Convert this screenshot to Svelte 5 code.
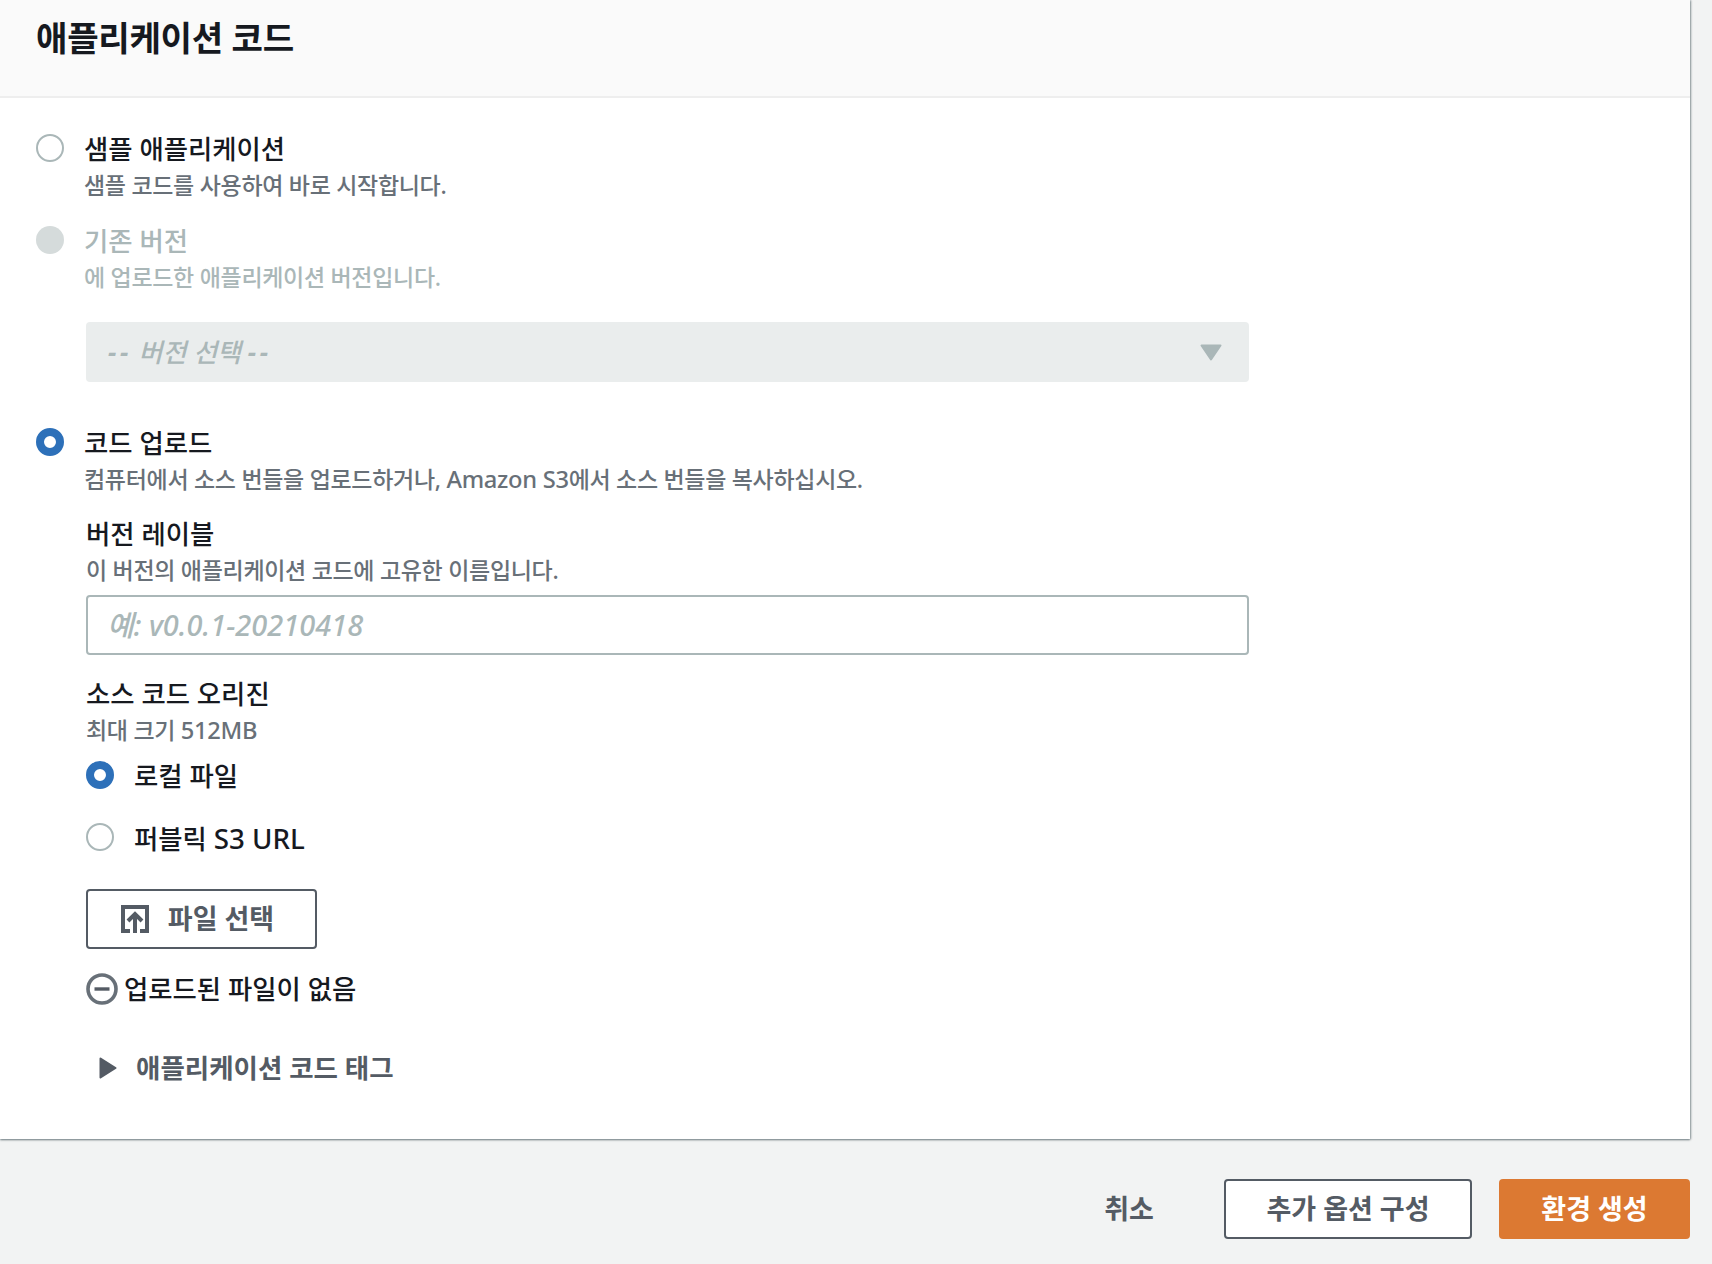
<script>
  const appRadios = [
    { label: '샘플 애플리케이션', hint: '샘플 코드를 사용하여 바로 시작합니다.', state: 'off' },
    { label: '기존 버전', hint: '에 업로드한 애플리케이션 버전입니다.', state: 'disabled' }
  ];
</script>

<div class="page">
  <section class="panel">
    <header class="panel-head">
      <h2>애플리케이션 코드</h2>
    </header>
    <div class="panel-body">
      {#each appRadios as r}
        <div class="radio-row" class:muted={r.state === 'disabled'}>
          <span class="radio {r.state}"></span>
          <div>
            <div class="label">{r.label}</div>
            <div class="hint">{r.hint}</div>
          </div>
        </div>
      {/each}

      <div class="nested">
        <div class="select">
          <span><span class="dash">--</span> 버전 선택 <span class="dash">--</span></span>
          <svg width="22" height="17" viewBox="0 0 22 17"><path d="M1.5 1.5h19L11 15.5z" fill="#aab7b8" stroke="#aab7b8" stroke-width="2" stroke-linejoin="round" /></svg>
        </div>
      </div>

      <div class="radio-row upload">
        <span class="radio on"></span>
        <div>
          <div class="label">코드 업로드</div>
          <div class="hint">컴퓨터에서 소스 번들을 업로드하거나, <span class="en">Amazon S3</span>에서 소스 번들을 복사하십시오.</div>
        </div>
      </div>

      <div class="nested">
        <div class="field version">
          <div class="label">버전 레이블</div>
          <div class="hint">이 버전의 애플리케이션 코드에 고유한 이름입니다.</div>
          <input class="text" placeholder="예: v0.0.1-20210418" />
        </div>

        <div class="field origin">
          <div class="label">소스 코드 오리진</div>
          <div class="hint">최대 크기 <span class="en">512MB</span></div>
          <div class="radio-row small first">
            <span class="radio on"></span>
            <div class="label">로컬 파일</div>
          </div>
          <div class="radio-row small second">
            <span class="radio off"></span>
            <div class="label">퍼블릭 <span class="en">S3 URL</span></div>
          </div>
        </div>

        <button class="btn file">
          <svg width="28" height="28" viewBox="0 0 28 28" fill="none" stroke="#545b64" stroke-width="4">
            <path d="M9 26H2V2h24v24H19" />
            <path d="M14 28V9M7 16l7-7 7 7" />
          </svg>
          파일 선택
        </button>

        <div class="no-file">
          <svg width="32" height="32" viewBox="0 0 32 32" fill="none">
            <circle cx="16" cy="16" r="14" stroke="#687078" stroke-width="3.6" />
            <path d="M8.5 16h15" stroke="#545b64" stroke-width="3.4" />
          </svg>
          <span>업로드된 파일이 없음</span>
        </div>

        <div class="tags">
          <svg width="18" height="22" viewBox="0 0 18 22"><path d="M1.5 1.5 16.5 11 1.5 20.5z" fill="#545b64" stroke="#545b64" stroke-width="2" stroke-linejoin="round" /></svg>
          <span>애플리케이션 코드 태그</span>
        </div>
      </div>
    </div>
  </section>

  <footer class="actions">
    <button class="btn link">취소</button>
    <button class="btn normal">추가 옵션 구성</button>
    <button class="btn primary">환경 생성</button>
  </footer>
</div>

<style>
  :global(body) {
    margin: 0;
    background: #f2f3f3;
  }

  .page {
    width: 1712px;
    height: 1264px;
    overflow: hidden;
    box-sizing: border-box;
    padding-right: 22px;
    font-family: "Noto Sans", "Noto Sans CJK KR", sans-serif;
    color: #16191f;
  }

  .panel {
    background: #fff;
    box-shadow: 0 1px 2px rgba(0, 28, 36, 0.5), 1px 0 2px rgba(0, 28, 36, 0.3);
    height: 1139px;
  }

  .panel-head {
    height: 98px;
    box-sizing: border-box;
    padding: 14px 36px 0;
    background: #fafafa;
    border-bottom: 2px solid #eeeeee;
  }

  h2 {
    margin: 0;
    font-size: 34.2px;
    line-height: 48px;
    font-weight: 700;
    letter-spacing: -0.3px;
  }

  .panel-body {
    padding: 33px 36px 0;
  }

  .radio-row {
    display: flex;
    gap: 20px;
    margin-bottom: 20px;
  }

  .radio {
    flex: none;
    box-sizing: border-box;
    width: 28px;
    height: 28px;
    margin-top: 3px;
    border-radius: 50%;
  }

  .radio.off {
    border: 2px solid #aab7b8;
    background: #fff;
  }

  .radio.disabled {
    background: #d5dbdb;
  }

  .radio.on {
    border: 8.5px solid #2d70b9;
    background: #fff;
  }

  .label {
    font-size: 26.4px;
    line-height: 36px;
    font-weight: 500;
  }

  .hint {
    font-size: 23px;
    line-height: 34px;
    padding: 1px 0;
    color: #687078;
    letter-spacing: -0.3px;
    font-weight: 500;
  }

  .en {
    font-weight: 500;
    font-size: 1.05em;
  }

  .hint .en {
    font-size: 1.03em;
  }

  .muted .label,
  .muted .hint {
    color: #aab7b8;
  }

  .nested {
    margin-left: 50px;
  }

  .select {
    width: 1163px;
    height: 60px;
    margin-top: 27px;
    box-sizing: border-box;
    padding: 0 27px 2px 22px;
    display: flex;
    align-items: center;
    justify-content: space-between;
    background: #eaeded;
    border-radius: 4px;
    color: #aab7b8;
    font-size: 26px;
    font-weight: 500;
    font-style: italic;
  }

  .select svg {
    margin-top: 2px;
  }

  .dash {
    letter-spacing: 3.5px;
    font-weight: 700;
  }

  .radio-row.upload {
    margin-top: 43px;
    margin-bottom: 0;
  }

  .field.version {
    margin-top: 19px;
  }

  .text {
    display: block;
    width: 1163px;
    height: 60px;
    margin-top: 7px;
    box-sizing: border-box;
    padding: 0 19px 2px;
    border: 2px solid #aab7b8;
    border-radius: 4px;
    background: #fff;
    font: italic 500 29px "Noto Sans", "Noto Sans CJK KR", sans-serif;
  }

  .text::placeholder {
    color: #aab7b8;
    opacity: 1;
  }

  .field.origin {
    margin-top: 21px;
  }

  .radio-row.small {
    align-items: flex-start;
    margin: 0;
  }

  .radio-row.first {
    margin-top: 10px;
  }

  .radio-row.second {
    margin-top: 26px;
  }

  .btn {
    box-sizing: border-box;
    height: 60px;
    border-radius: 4px;
    font-family: inherit;
    font-size: 27px;
    font-weight: 700;
    color: #545b64;
    background: #fff;
    border: 2px solid #545b64;
    display: inline-flex;
    align-items: center;
    justify-content: center;
    padding: 0 0 4px;
  }

  .btn.file {
    width: 231px;
    margin-top: 32px;
    gap: 19px;
    display: flex;
    padding-right: 8px;
  }

  .btn.file svg {
    margin-top: 4px;
  }

  .no-file {
    display: flex;
    align-items: center;
    gap: 6px;
    margin-top: 22px;
    font-size: 26.4px;
    line-height: 36px;
    font-weight: 500;
  }

  .tags {
    display: flex;
    align-items: center;
    gap: 19px;
    margin-top: 43px;
    padding-left: 13px;
    font-size: 26.5px;
    line-height: 36px;
    font-weight: 700;
    color: #545b64;
  }

  .actions {
    display: flex;
    justify-content: flex-end;
    align-items: center;
    padding-top: 40px;
  }

  .btn.link {
    background: transparent;
    border: 0;
    width: 50px;
    margin-right: 70px;
  }

  .btn.normal {
    width: 248px;
    margin-right: 27px;
  }

  .btn.primary {
    width: 191px;
    background: #dc7932;
    border: 0;
    color: #fff;
  }
</style>
